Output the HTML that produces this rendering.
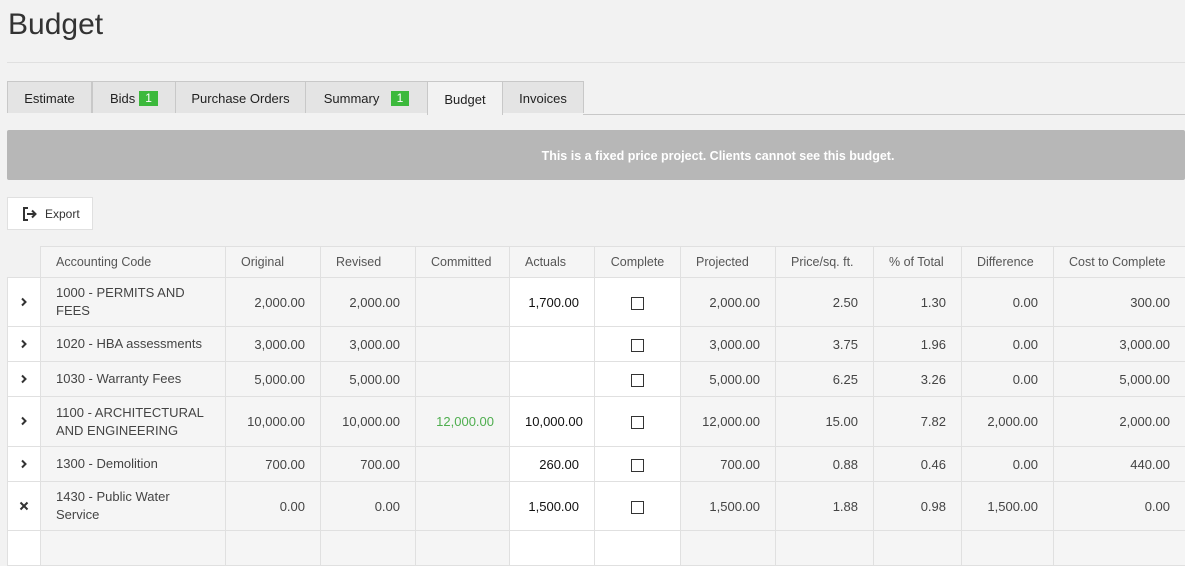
<!DOCTYPE html>
<html><head><meta charset="utf-8"><style>
body{margin:0;background:#f2f2f2;font-family:"Liberation Sans",Arial,sans-serif;color:#333;width:1185px;height:533px;overflow:hidden;position:relative}
h1{position:absolute;left:8px;top:8px;margin:0;font-weight:normal;font-size:30px;color:#333}
.hr{position:absolute;left:7px;right:0;top:62px;height:1px;background:#e0e0e0}
.tabs{position:absolute;top:81px;left:7px;height:33px;right:0}
.tab{position:absolute;top:0;height:32px;background:#e4e4e4;border:1px solid #c8c8c8;border-bottom:none;font-size:13px;line-height:34px;text-align:center;box-sizing:border-box;color:#222}
.tab.act{background:#f2f2f2;height:34px;line-height:36px}
.tabline{position:absolute;left:576px;right:0;top:33px;height:1px;background:#c8c8c8}
.bd{display:inline-block;background:#3cb93c;color:#fff;font-size:12px;line-height:15px;padding:0 6px;margin-left:4px;vertical-align:1px}
.banner{position:absolute;left:7px;right:0;top:130px;height:50px;background:#b7b7b7;border-radius:2px;color:#fff;font-weight:bold;font-size:12.5px;line-height:52px;text-align:center;padding-left:244px;box-sizing:border-box}
.exp{position:absolute;left:7px;top:197px;width:86px;height:33px;background:#fff;border:1px solid #e0e0e0;box-sizing:border-box;font-size:12px;line-height:33px;color:#333}
table{position:absolute;left:7px;top:246px;width:1178px;border-collapse:collapse;table-layout:fixed;font-size:13px}
td,th{border:1px solid #e0e0e0;background:#f5f5f5;padding:0 15px;text-align:right;color:#444;font-weight:normal;box-sizing:border-box}
th{height:31px;color:#555;text-align:left;white-space:nowrap;font-size:12.5px;overflow:hidden}
th.c{text-align:center;padding:0}
td.w{background:#fff}
td.code{text-align:left;line-height:18px}
th.e{background:#f2f2f2;border:none;border-bottom:1px solid #e0e0e0}
td.ic{background:#fff;text-align:center;padding:0;color:#333}
td.a{color:#111}
.cb{display:inline-block;width:11px;height:11px;border:1px solid #333;vertical-align:middle}
td.chk{text-align:center;padding:0;background:#fff}
.g{color:#4fae4f}
</style></head><body>
<h1>Budget</h1><div class="hr"></div>
<div class="tabs">
<div class="tab" style="left:0;width:85px">Estimate</div>
<div class="tab" style="left:85px;width:84px">Bids<span class="bd">1</span></div>
<div class="tab" style="left:168px;width:131px">Purchase Orders</div>
<div class="tab" style="left:298px;width:123px">Summary &nbsp;<span class="bd">1</span></div>
<div class="tab act" style="left:420px;width:76px">Budget</div>
<div class="tab" style="left:495px;width:82px">Invoices</div>
<div class="tabline"></div>
</div>
<div class="banner">This is a fixed price project. Clients cannot see this budget.</div>
<div class="exp"><svg width="16" height="14" viewBox="0 0 16 14" style="position:absolute;left:14px;top:9px"><path d="M6 1H2v12h4" fill="none" stroke="#333" stroke-width="2"/><path d="M5 7h8M10 3.5L13.5 7 10 10.5" fill="none" stroke="#333" stroke-width="2"/></svg><span style="position:absolute;left:37px">Export</span></div>
<table>
<colgroup><col style="width:33px"><col style="width:185px"><col style="width:95px"><col style="width:95px"><col style="width:94px"><col style="width:85px"><col style="width:86px"><col style="width:95px"><col style="width:98px"><col style="width:88px"><col style="width:92px"><col style="width:132px"></colgroup>
<tr><th class="e"></th><th>Accounting Code</th><th>Original</th><th>Revised</th><th>Committed</th><th>Actuals</th><th class="c">Complete</th><th>Projected</th><th>Price/sq. ft.</th><th>% of Total</th><th>Difference</th><th>Cost to Complete</th></tr>
<tr style="height:49px"><td class="ic"><svg width="8" height="10" viewBox="0 0 8 10"><path d="M2 1.5L5.5 5 2 8.5" fill="none" stroke="#333" stroke-width="2"/></svg></td><td class="code">1000 - PERMITS AND FEES</td><td>2,000.00</td><td>2,000.00</td><td></td><td class="w a">1,700.00</td><td class="chk"><span class="cb"></span></td><td>2,000.00</td><td>2.50</td><td>1.30</td><td>0.00</td><td>300.00</td></tr>
<tr style="height:35px"><td class="ic"><svg width="8" height="10" viewBox="0 0 8 10"><path d="M2 1.5L5.5 5 2 8.5" fill="none" stroke="#333" stroke-width="2"/></svg></td><td class="code">1020 - HBA assessments</td><td>3,000.00</td><td>3,000.00</td><td></td><td class="w a"></td><td class="chk"><span class="cb"></span></td><td>3,000.00</td><td>3.75</td><td>1.96</td><td>0.00</td><td>3,000.00</td></tr>
<tr style="height:35px"><td class="ic"><svg width="8" height="10" viewBox="0 0 8 10"><path d="M2 1.5L5.5 5 2 8.5" fill="none" stroke="#333" stroke-width="2"/></svg></td><td class="code">1030 - Warranty Fees</td><td>5,000.00</td><td>5,000.00</td><td></td><td class="w a"></td><td class="chk"><span class="cb"></span></td><td>5,000.00</td><td>6.25</td><td>3.26</td><td>0.00</td><td>5,000.00</td></tr>
<tr style="height:50px"><td class="ic"><svg width="8" height="10" viewBox="0 0 8 10"><path d="M2 1.5L5.5 5 2 8.5" fill="none" stroke="#333" stroke-width="2"/></svg></td><td class="code">1100 - ARCHITECTURAL AND ENGINEERING</td><td>10,000.00</td><td>10,000.00</td><td class="g">12,000.00</td><td class="w a">10,000.00</td><td class="chk"><span class="cb"></span></td><td>12,000.00</td><td>15.00</td><td>7.82</td><td>2,000.00</td><td>2,000.00</td></tr>
<tr style="height:35px"><td class="ic"><svg width="8" height="10" viewBox="0 0 8 10"><path d="M2 1.5L5.5 5 2 8.5" fill="none" stroke="#333" stroke-width="2"/></svg></td><td class="code">1300 - Demolition</td><td>700.00</td><td>700.00</td><td></td><td class="w a">260.00</td><td class="chk"><span class="cb"></span></td><td>700.00</td><td>0.88</td><td>0.46</td><td>0.00</td><td>440.00</td></tr>
<tr style="height:49px"><td class="ic"><svg width="10" height="10" viewBox="0 0 10 10"><path d="M1.5 1.5l7 7M8.5 1.5l-7 7" fill="none" stroke="#333" stroke-width="2"/></svg></td><td class="code">1430 - Public Water Service</td><td>0.00</td><td>0.00</td><td></td><td class="w a">1,500.00</td><td class="chk"><span class="cb"></span></td><td>1,500.00</td><td>1.88</td><td>0.98</td><td>1,500.00</td><td>0.00</td></tr>
<tr style="height:35px"><td class="ic"></td><td></td><td></td><td></td><td></td><td class="w"></td><td class="chk"></td><td></td><td></td><td></td><td></td><td></td></tr>
</table>
</body></html>
